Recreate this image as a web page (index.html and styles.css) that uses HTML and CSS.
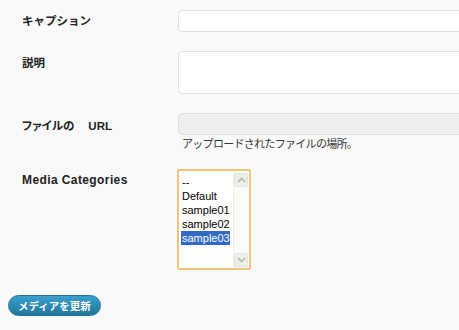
FILE: index.html
```html
<!DOCTYPE html>
<html lang="ja">
<head>
    <meta charset="UTF-8">
    <title>メディアを編集</title>
    <link rel="stylesheet" href="styles.css">
</head>
<body>
    <div class="media-form">
        <div class="field-row">
            <label class="field-label" for="caption">キャプション</label>
            <input type="text" id="caption" class="text-field">
        </div>

        <div class="field-row row-desc">
            <label class="field-label" for="description">説明</label>
            <textarea id="description" class="text-area"></textarea>
        </div>

        <div class="field-row row-url">
            <label class="field-label" for="fileUrl">ファイルの<span class="label-url">URL</span></label>
            <div>
                <input type="text" id="fileUrl" class="text-field readonly" readonly>
                <p class="help-text">アップロードされたファイルの場所。</p>
            </div>
        </div>

        <div class="field-row row-cats">
            <label class="field-label label-latin">Media Categories</label>
            <div class="listbox">
                <div class="listbox-options">
                    <div class="listbox-option">--</div>
                    <div class="listbox-option">Default</div>
                    <div class="listbox-option">sample01</div>
                    <div class="listbox-option">sample02</div>
                    <div class="listbox-option selected">sample03</div>
                </div>
                <div class="listbox-scroll">
                    <span class="scroll-btn">
                        <svg width="9" height="6" viewBox="0 0 9 6"><polyline points="1,5 4.5,1.5 8,5" fill="none" stroke="#b9b9b0" stroke-width="1.6"/></svg>
                    </span>
                    <span class="scroll-btn">
                        <svg width="9" height="6" viewBox="0 0 9 6"><polyline points="1,1 4.5,4.5 8,1" fill="none" stroke="#b9b9b0" stroke-width="1.6"/></svg>
                    </span>
                </div>
            </div>
        </div>
    </div>

    <div class="form-actions">
        <button class="button-primary">メディアを更新</button>
    </div>
</body>
</html>
```

FILE: styles.css
```css
html, body {
    margin: 0;
    padding: 0;
    overflow: hidden;
}
body {
    font-family: "Liberation Sans", "Noto Sans CJK JP", sans-serif;
    background-color: #f9f9f9;
    color: #222;
    width: 459px;
    height: 330px;
}
.media-form {
    padding: 10px 0 0 22px;
}
.field-row {
    display: grid;
    grid-template-columns: 156px 1fr;
}
.row-desc {
    margin-top: 19px;
}
.row-url {
    margin-top: 19px;
}
.row-cats {
    margin-top: 18px;
}
.field-label {
    font-size: 11.5px;
    font-weight: bold;
    line-height: 16px;
    padding-top: 3px;
    color: #222;
}
.row-desc .field-label {
    padding-top: 4px;
}
.row-url .field-label {
    padding-top: 5px;
    font-feature-settings: "palt";
}
.label-url {
    margin-left: 14px;
}
.label-latin {
    font-size: 12px;
    letter-spacing: 0.4px;
}

.text-field,
.text-area {
    display: block;
    width: 300px;
    height: 22px;
    margin: 0;
    padding: 2px 4px;
    box-sizing: border-box;
    border: 1px solid #dfdfdf;
    border-radius: 4px;
    background-color: #fff;
    font-size: 12px;
    font-family: inherit;
}
.text-area {
    height: 43px;
    resize: none;
}
.text-field.readonly {
    background-color: #eeeeee;
}
.help-text {
    margin: 2px 0 0 4px;
    font-size: 11px;
    line-height: 14px;
    letter-spacing: -0.7px;
    color: #333;
}

/* カテゴリ選択のリストボックス */
.listbox {
    display: flex;
    width: 74px;
    height: 101px;
    margin-left: -1px;
    box-sizing: border-box;
    border: 2px solid #f0c47a;
    border-radius: 2px;
    background-color: #fff;
}
.listbox-options {
    flex: 1;
    padding: 4px 3px 0 2px;
}
.listbox-option {
    font-size: 11px;
    line-height: 14px;
    padding-left: 1px;
    color: #000;
    white-space: nowrap;
}
.listbox-option.selected {
    background-color: #316ac5;
    color: #fff;
}
.listbox-scroll {
    width: 16px;
    display: flex;
    flex-direction: column;
    justify-content: space-between;
    align-items: center;
    padding: 2px 0 1px;
    background-color: #fbfbf7;
    border-left: 1px solid #efefe8;
}
.scroll-btn {
    display: flex;
    align-items: center;
    justify-content: center;
    width: 14px;
    height: 14px;
    box-sizing: border-box;
    border: 1px solid #e4e3dc;
    border-radius: 2px;
    background-color: #efeee8;
}

.form-actions {
    padding: 25px 0 0 8px;
}
.button-primary {
    height: 21px;
    padding: 0 9px;
    border: 1px solid #21759b;
    border-radius: 11px;
    background: linear-gradient(#3aa0cc, #21769c);
    color: #fff;
    font-family: "Noto Sans CJK JP", sans-serif;
    font-size: 10.5px;
    font-weight: bold;
    line-height: 19px;
}
```
